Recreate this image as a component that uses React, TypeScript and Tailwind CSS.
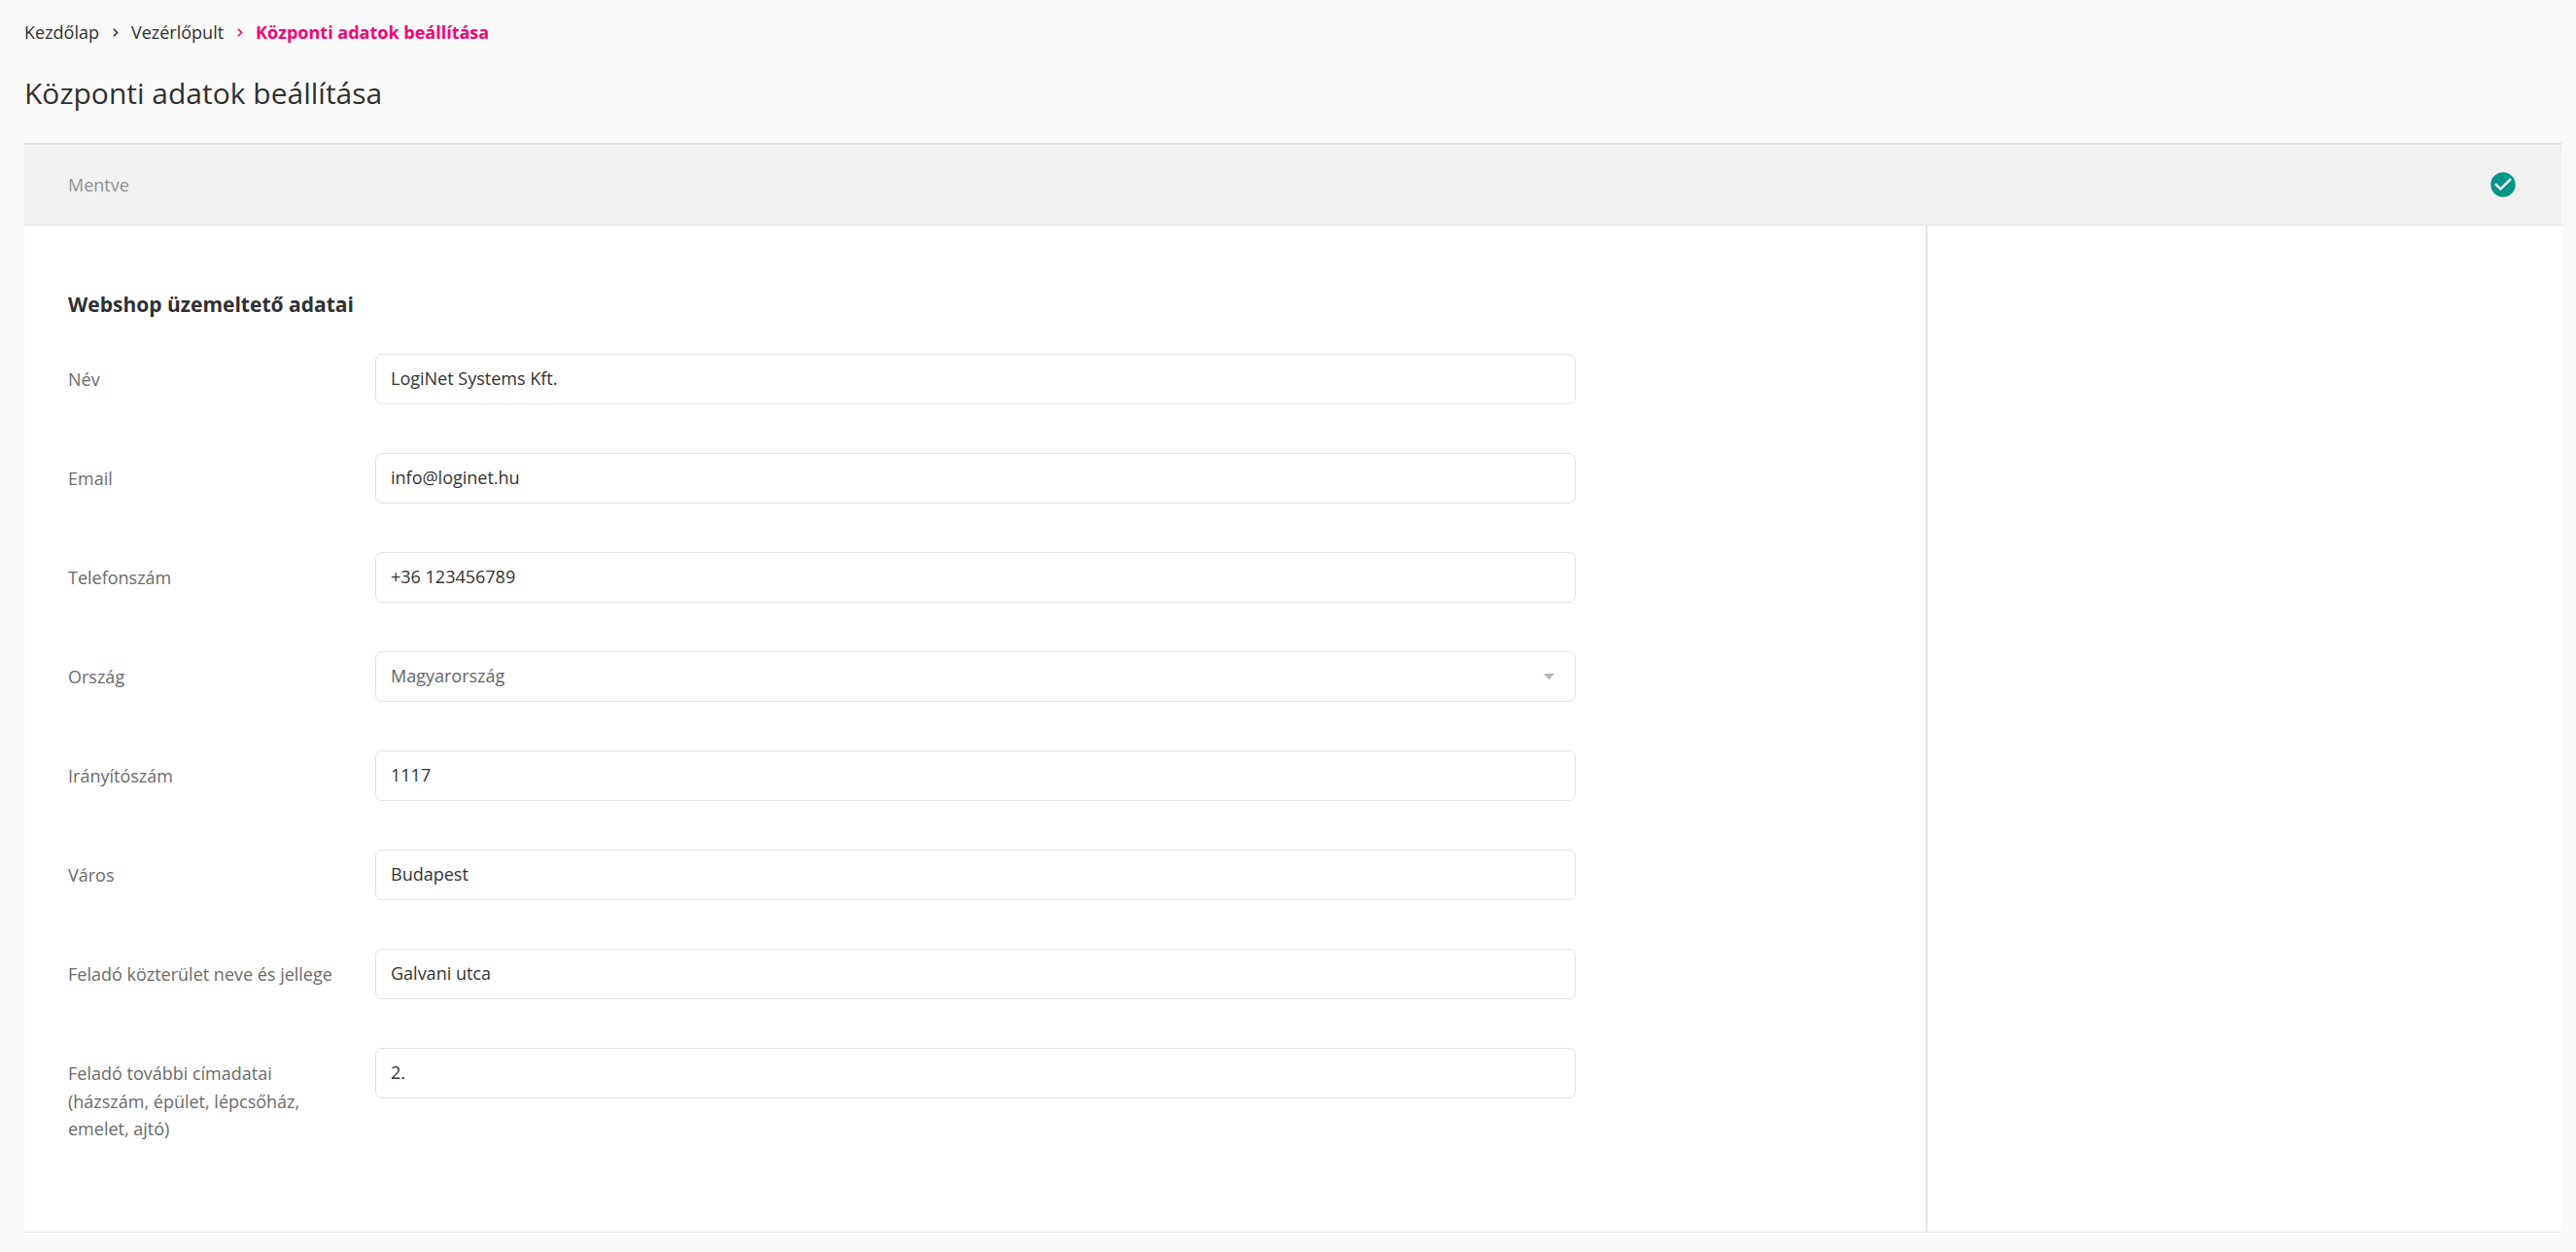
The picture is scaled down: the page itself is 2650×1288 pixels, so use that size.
import { Fragment } from "react";

type Field = { label: string; value: string; select?: boolean };

const fields: Field[] = [
  { label: "Név", value: "LogiNet Systems Kft." },
  { label: "Email", value: "info@loginet.hu" },
  { label: "Telefonszám", value: "+36 123456789" },
  { label: "Ország", value: "Magyarország", select: true },
  { label: "Irányítószám", value: "1117" },
  { label: "Város", value: "Budapest" },
  { label: "Feladó közterület neve és jellege", value: "Galvani utca" },
  {
    label: "Feladó további címadatai (házszám, épület, lépcsőház, emelet, ajtó)",
    value: "2.",
  },
];

const crumbs = ["Kezdőlap", "Vezérlőpult", "Központi adatok beállítása"];

function Chevron() {
  return (
    <svg className="mr-[13px] ml-[14px] h-[9px] w-[6px]" viewBox="0 0 6 9" fill="none" stroke="currentColor" strokeWidth="1.6">
      <path d="M0.8 0.8 4.6 4.5 0.8 8.2" />
    </svg>
  );
}

function FieldRow({ label, value, select }: Field) {
  return (
    <div className="flex h-[52px] items-start">
      <label className="w-[316px] shrink-0 pt-[12px] pr-[36px] leading-[28.5px] text-[#6b6b6b]">{label}</label>
      {select ? (
        <button className="flex h-[52px] w-[1235px] items-center justify-between rounded-[7px] border border-[#e3e3e3] bg-white pr-[21px] pb-[1px] pl-[15px] text-[#666]">
          <span>{value}</span>
          <svg className="h-[6px] w-[11px]" viewBox="0 0 11 6">
            <path d="M0 0H11L5.5 6Z" fill="#b5b5b5" />
          </svg>
        </button>
      ) : (
        <input
          className="h-[52px] w-[1235px] rounded-[7px] border border-[#e3e3e3] bg-white pb-[3px] pl-[15px] text-[#333] outline-none"
          defaultValue={value}
        />
      )}
    </div>
  );
}

export default function App() {
  return (
    <div className="flex h-[1288px] flex-col bg-[#fafafa] pr-[15px] pl-[25px] font-['Open_Sans',sans-serif] text-[18px] text-[#303030]">
      <nav className="mt-[21px] flex h-[24px] shrink-0 items-center">
        {crumbs.map((crumb, i) => (
          <Fragment key={crumb}>
            {i > 0 && (
              <span className={i === 2 ? "text-[#f70073]" : ""}>
                <Chevron />
              </span>
            )}
            <span className={i === 2 ? "font-bold text-[#f70073]" : ""}>{crumb}</span>
          </Fragment>
        ))}
      </nav>
      <h1 className="mt-[31px] h-[40px] shrink-0 text-[30px] leading-[40px]">Központi adatok beállítása</h1>
      <main className="mt-[31px] flex h-[1121px] shrink-0 flex-col border-t-2 border-b border-t-[#e3e3e3] border-b-[#e3e3e3] bg-white">
        <header className="flex h-[83px] shrink-0 items-center justify-between border-b border-[#e3e3e3] bg-[#f1f1f1] pr-[47px] pl-[45px] text-[#919191]">
          <span>Mentve</span>
          <svg className="h-[26px] w-[26px]" viewBox="1.8 1.8 20.4 20.4">
            <path
              d="M12 2C6.48 2 2 6.48 2 12s4.48 10 10 10 10-4.48 10-10S17.52 2 12 2zm-2 15l-5-5 1.41-1.41L10 14.17l7.59-7.59L19 8l-9 9z"
              fill="#009688"
            />
          </svg>
        </header>
        <div className="flex grow">
          <section className="w-[1958px] shrink-0 border-r-2 border-[#e3e3e3] pt-[67px] pl-[45px]">
            <h2 className="h-[28px] text-[21px] leading-[28px] font-bold">Webshop üzemeltető adatai</h2>
            <form className="mt-[37px] flex flex-col gap-[50px]">
              {fields.map((field) => (
                <FieldRow key={field.label} {...field} />
              ))}
            </form>
          </section>
          <aside className="grow" />
        </div>
      </main>
    </div>
  );
}
